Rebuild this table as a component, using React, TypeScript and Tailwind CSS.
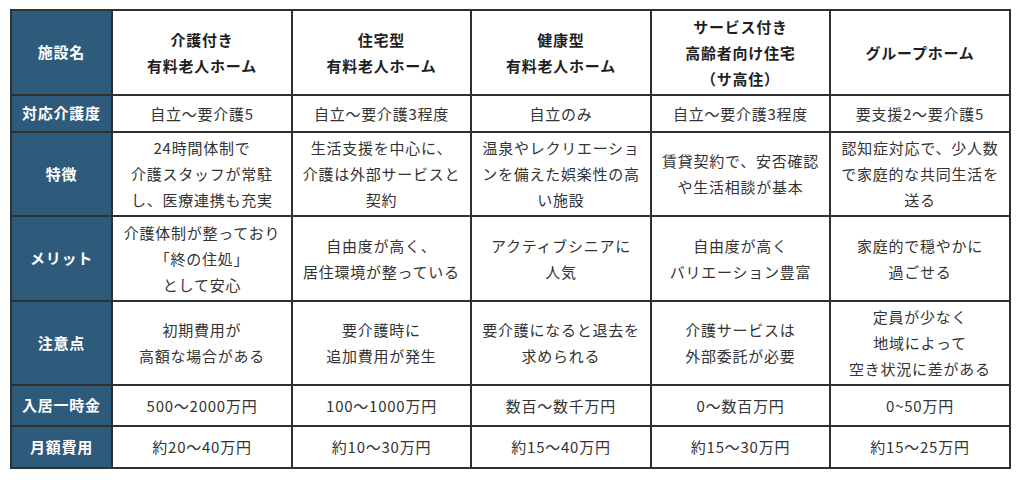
import React from "react";

const cols = ["介護付き", "住宅型", "健康型", "サ高住", "GH"];

type Row = { label: string; cells: string[][] };

const header: string[][] = [
  ["介護付き", "有料老人ホーム"],
  ["住宅型", "有料老人ホーム"],
  ["健康型", "有料老人ホーム"],
  ["サービス付き", "高齢者向け住宅", "（サ高住）"],
  ["グループホーム"],
];

const rows: Row[] = [
  {
    label: "対応介護度",
    cells: [["自立〜要介護5"], ["自立〜要介護3程度"], ["自立のみ"], ["自立〜要介護3程度"], ["要支援2〜要介護5"]],
  },
  {
    label: "特徴",
    cells: [
      ["24時間体制で", "介護スタッフが常駐", "し、医療連携も充実"],
      ["生活支援を中心に、", "介護は外部サービスと", "契約"],
      ["温泉やレクリエーショ", "ンを備えた娯楽性の高", "い施設"],
      ["賃貸契約で、安否確認", "や生活相談が基本"],
      ["認知症対応で、少人数", "で家庭的な共同生活を", "送る"],
    ],
  },
  {
    label: "メリット",
    cells: [
      ["介護体制が整っており", "「終の住処」", "として安心"],
      ["自由度が高く、", "居住環境が整っている"],
      ["アクティブシニアに", "人気"],
      ["自由度が高く", "バリエーション豊富"],
      ["家庭的で穏やかに", "過ごせる"],
    ],
  },
  {
    label: "注意点",
    cells: [
      ["初期費用が", "高額な場合がある"],
      ["要介護時に", "追加費用が発生"],
      ["要介護になると退去を", "求められる"],
      ["介護サービスは", "外部委託が必要"],
      ["定員が少なく", "地域によって", "空き状況に差がある"],
    ],
  },
  {
    label: "入居一時金",
    cells: [["500〜2000万円"], ["100〜1000万円"], ["数百〜数千万円"], ["0〜数百万円"], ["0~50万円"]],
  },
  {
    label: "月額費用",
    cells: [["約20〜40万円"], ["約10〜30万円"], ["約15〜40万円"], ["約15〜30万円"], ["約15〜25万円"]],
  },
];

function Lines({ lines }: { lines: string[] }) {
  return (
    <>
      {lines.map((l, i) => (
        <span key={i} className="block whitespace-nowrap">
          {l}
        </span>
      ))}
    </>
  );
}

export default function App() {
  return (
    <div
      className="w-[1024px] h-[480px] bg-white overflow-hidden pt-[9px] pl-[10px]"
      style={{ fontFamily: '"Noto Sans CJK JP", "Noto Sans", sans-serif' }}
    >
      <div className="w-[1001px] h-[460px] bg-[#303030] p-[2px] grid grid-cols-[99px_178px_177px_178px_177px_178px] grid-rows-[83px_35px_82px_83px_82px_39px_40px] gap-[2px]">
        <div className="bg-[#2e5b7c] flex items-center justify-center text-white font-bold text-[15px] tracking-[0.05em]">
          施設名
        </div>
        {header.map((h, i) => (
          <div
            key={cols[i]}
            className="bg-white flex flex-col items-center justify-center text-center text-[#1f1f1f] font-bold text-[15px] leading-[26px] tracking-[0.05em]"
          >
            <Lines lines={h} />
          </div>
        ))}
        {rows.map((r) => (
          <React.Fragment key={r.label}>
            <div className="bg-[#2e5b7c] flex items-center justify-center text-white font-bold text-[15px] tracking-[0.05em]">
              {r.label}
            </div>
            {r.cells.map((c, i) => (
              <div
                key={cols[i]}
                className="bg-white flex flex-col items-center justify-center text-center text-[#333333] text-[15px] leading-[26px] tracking-[0.05em]"
              >
                <Lines lines={c} />
              </div>
            ))}
          </React.Fragment>
        ))}
      </div>
    </div>
  );
}
